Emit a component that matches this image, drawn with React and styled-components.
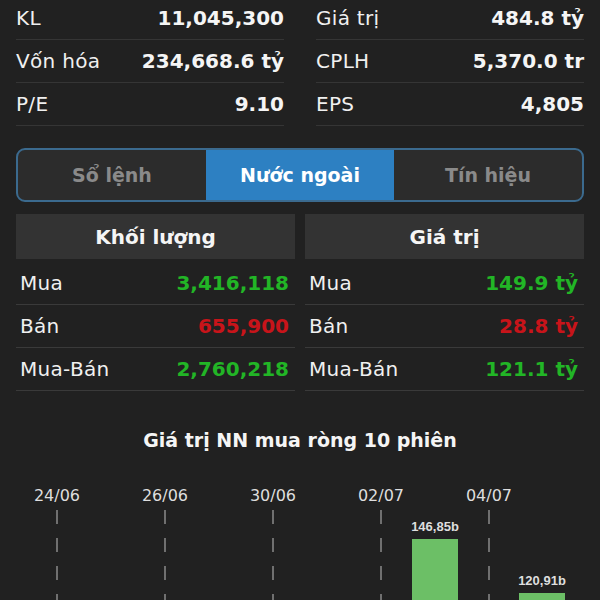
import styled, { createGlobalStyle } from "styled-components";

const GlobalStyle = createGlobalStyle`
  html, body {
    margin: 0;
    padding: 0;
    background: #212121;
    overflow: hidden;
  }
  body {
    font-family: "DejaVu Sans", "Noto Sans", sans-serif;
    color: #f2f2f2;
  }
`;

const Page = styled.div`
  width: 600px;
  height: 600px;
  overflow: hidden;
`;

const Section = styled.div`
  padding: 0 16px;
`;

const StatsGrid = styled.div`
  display: grid;
  grid-template-columns: 1fr 1fr;
  column-gap: 32px;
  margin-top: -3px;
`;

const StatRow = styled.div`
  height: 42px;
  border-bottom: 1px solid #353535;
  display: flex;
  align-items: center;
  justify-content: space-between;
`;

const Label = styled.span`
  font-size: 20px;
  letter-spacing: 0.3px;
  color: #f0f0f0;
`;

const Value = styled.span`
  font-size: 20px;
  font-weight: bold;
  color: ${(p) => p.color || "#f5f5f5"};
`;

const Tabs = styled.div`
  margin-top: 22px;
  height: 50px;
  border: 2px solid #3b6a8e;
  border-radius: 9px;
  overflow: hidden;
  display: grid;
  grid-template-columns: repeat(3, 1fr);
  background: #2c2c2c;
`;

const Tab = styled.div`
  display: flex;
  align-items: center;
  justify-content: center;
  font-size: 19px;
  font-weight: bold;
  color: ${(p) => (p.active ? "#ffffff" : "#8a8a8a")};
  background: ${(p) => (p.active ? "#2d80c2" : "transparent")};
`;

const Tables = styled.div`
  margin-top: 12px;
  display: grid;
  grid-template-columns: 1fr 1fr;
  column-gap: 10px;
`;

const TableHead = styled.div`
  height: 45px;
  background: #333333;
  display: flex;
  align-items: center;
  justify-content: center;
  font-size: 20px;
  font-weight: bold;
  color: #f5f5f5;
  margin-bottom: 3px;
`;

const TableRow = styled.div`
  height: 42px;
  border-bottom: 1px solid #3a3a3a;
  display: flex;
  align-items: center;
  justify-content: space-between;
  padding: 0 6px 0 4px;
`;

const ChartTitle = styled.div`
  margin-top: 37px;
  text-align: center;
  font-size: 19px;
  font-weight: bold;
  color: #f5f5f5;
  line-height: 24px;
`;

const Chart = styled.svg`
  display: block;
  margin-top: 18px;
`;

const GREEN = "#22b526";
const RED = "#c8141a";

const stats = [
  ["KL", "11,045,300", "Giá trị", "484.8 tỷ"],
  ["Vốn hóa", "234,668.6 tỷ", "CPLH", "5,370.0 tr"],
  ["P/E", "9.10", "EPS", "4,805"],
];

const volume = [
  ["Mua", "3,416,118", GREEN],
  ["Bán", "655,900", RED],
  ["Mua-Bán", "2,760,218", GREEN],
];

const value = [
  ["Mua", "149.9 tỷ", GREEN],
  ["Bán", "28.8 tỷ", RED],
  ["Mua-Bán", "121.1 tỷ", GREEN],
];

const dates = ["24/06", "26/06", "30/06", "02/07", "04/07"];
const bars = [
  { x: 435, top: 69, label: "146,85b" },
  { x: 542, top: 123, label: "120,91b" },
];

function Table({ title, rows }) {
  return (
    <div>
      <TableHead>{title}</TableHead>
      {rows.map(([l, v, c]) => (
        <TableRow key={l}>
          <Label>{l}</Label>
          <Value color={c}>{v}</Value>
        </TableRow>
      ))}
    </div>
  );
}

export default function App() {
  return (
    <Page>
      <GlobalStyle />
      <Section>
        <StatsGrid>
          {stats.map(([l1, v1, l2, v2]) => [
            <StatRow key={l1}>
              <Label>{l1}</Label>
              <Value>{v1}</Value>
            </StatRow>,
            <StatRow key={l2}>
              <Label>{l2}</Label>
              <Value>{v2}</Value>
            </StatRow>,
          ])}
        </StatsGrid>
        <Tabs>
          <Tab>Sổ lệnh</Tab>
          <Tab active>Nước ngoài</Tab>
          <Tab>Tín hiệu</Tab>
        </Tabs>
        <Tables>
          <Table title="Khối lượng" rows={volume} />
          <Table title="Giá trị" rows={value} />
        </Tables>
        <ChartTitle>Giá trị NN mua ròng 10 phiên</ChartTitle>
      </Section>
      <Chart width="600" height="140" viewBox="0 0 600 140">
        {dates.map((d, i) => {
          const x = 57 + i * 108;
          return (
            <g key={d}>
              <text
                x={x}
                y={31}
                textAnchor="middle"
                fill="#dedede"
                fontSize="16"
                fontFamily="DejaVu Sans, sans-serif"
              >
                {d}
              </text>
              <line x1={x} x2={x} y1={40} y2={140} stroke="#8a8a8a" strokeWidth="1.5" strokeDasharray="14 14" />
            </g>
          );
        })}
        {bars.map((b) => (
          <g key={b.label}>
            <text
              x={b.x}
              y={b.top - 8}
              textAnchor="middle"
              fill="#dedede"
              fontSize="13"
              fontWeight="bold"
              fontFamily="Liberation Sans, sans-serif"
            >
              {b.label}
            </text>
            <rect x={b.x - 23} y={b.top} width="46" height={140 - b.top} fill="#6cbf66" />
          </g>
        ))}
      </Chart>
    </Page>
  );
}
